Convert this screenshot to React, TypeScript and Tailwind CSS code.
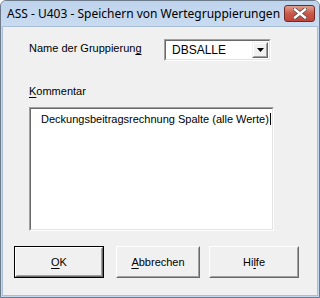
import React from "react";

const sunken =
  "border border-t-[#a0a0a0] border-l-[#a0a0a0] border-b-white border-r-white";
const sunkenInner =
  "border border-t-[#696969] border-l-[#696969] border-b-[#e3e3e3] border-r-[#e3e3e3]";

function Btn({ children, def, w }: { children: React.ReactNode; def?: boolean; w: string }) {
  const inner = (
    <div className="border border-t-white border-l-white border-b-[#696969] border-r-[#696969] h-full">
      <div className="border border-t-[#f0f0f0] border-l-[#f0f0f0] border-b-[#a0a0a0] border-r-[#a0a0a0] h-full flex items-center justify-center bg-[#f0f0f0] text-[11px] text-black">
        {children}
      </div>
    </div>
  );
  return (
    <div className={`${w} h-[32px] ${def ? "border border-black" : ""}`}>{inner}</div>
  );
}

export default function App() {
  return (
    <div
      className="w-[320px] h-[298px] flex flex-col bg-[#c4d7ee] border border-[#6c7a89] rounded-t-[6px] overflow-hidden"
      style={{ fontFamily: '"Liberation Sans", Arial, sans-serif' }}
    >
      {/* Title bar */}
      <div className="h-[25px] flex items-start relative bg-gradient-to-b from-[#bed3ec] to-[#c9dbf0]">
        <div
          className="pl-[6px] pt-[5px] text-[12px] leading-[16px] text-black whitespace-nowrap"
          style={{ fontFamily: '"Noto Sans", sans-serif' }}
        >
          ASS - U403 - Speichern von Wertegruppierungen
        </div>
        <div className="absolute left-[283px] top-[4px] w-[31px] h-[17px] rounded-[3px] border border-[#6e2a25] bg-gradient-to-b from-[#e1a08f] via-[#c9584a] to-[#c2443a] flex items-center justify-center">
          <svg width="14" height="11" viewBox="0 0 14 11">
            <path
              d="M2 1.5 L12 9.5 M12 1.5 L2 9.5"
              stroke="#5a4a4a"
              strokeWidth="4"
              strokeLinecap="square"
            />
            <path
              d="M2 1.5 L12 9.5 M12 1.5 L2 9.5"
              stroke="#ffffff"
              strokeWidth="2.4"
              strokeLinecap="square"
            />
          </svg>
        </div>
      </div>

      {/* Client area */}
      <div className="flex-1 mx-[1px] mb-[1px] border border-[#a9bfd8] bg-[#f0f0f0] flex flex-col">
        <div className="flex-1 bg-[#f0f0f0] pl-[26px] pt-[12px] flex flex-col text-black">
          {/* Row 1 */}
          <div className="flex items-start">
            <div className="w-[135px] pt-[3px] text-[11px] leading-[13px] whitespace-nowrap">
              Name der Gruppierun<span className="underline underline-offset-2">g</span>
            </div>
            <div className={`w-[107px] h-[22px] ${sunken}`}>
              <div className={`h-full bg-white flex items-center ${sunkenInner}`}>
                <span className="pl-[6px] flex-1 text-[12px] leading-[14px] text-black">DBSALLE</span>
                <div className="w-[16px] h-[16px] mr-[1px] border border-t-[#f0f0f0] border-l-[#f0f0f0] border-b-[#696969] border-r-[#696969]">
                  <div className="h-full border border-t-white border-l-white border-b-[#a0a0a0] border-r-[#a0a0a0] bg-[#f0f0f0] flex items-center justify-center">
                    <svg width="7" height="4" viewBox="0 0 7 4">
                      <path d="M0 0 H7 L3.5 4 Z" fill="#000" />
                    </svg>
                  </div>
                </div>
              </div>
            </div>
          </div>

          {/* Kommentar label */}
          <div className="mt-[24px] text-[11px] leading-[13px]">
            <span className="underline underline-offset-2">K</span>ommentar
          </div>

          {/* Textarea */}
          <div className={`mt-[9px] w-[245px] h-[124px] ${sunken}`}>
            <div className={`h-full bg-white ${sunkenInner} pl-[10px] pt-[3px]`}>
              <div className="flex items-center text-[11px] leading-[14px] text-black whitespace-nowrap">
                <span>Deckungsbeitragsrechnung Spalte (alle Werte)</span>
                <span className="inline-block w-[1px] h-[12px] bg-black ml-[1px]" />
              </div>
            </div>
          </div>

          {/* Buttons */}
          <div className="mt-[15px] -ml-[15px] flex">
            <Btn def w="w-[90px]">
              <span className="underline underline-offset-2">O</span>K
            </Btn>
            <div className="w-[12px]" />
            <Btn w="w-[84px]">
              <span className="underline underline-offset-2">A</span>bbrechen
            </Btn>
            <div className="w-[9px]" />
            <Btn w="w-[90px]">
              Hi<span className="underline underline-offset-2">l</span>fe
            </Btn>
          </div>
        </div>
      </div>
    </div>
  );
}
